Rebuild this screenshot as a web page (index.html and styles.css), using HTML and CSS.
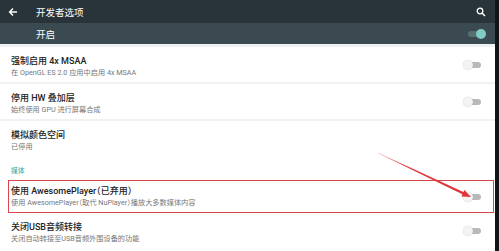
FILE: index.html
```html
<!DOCTYPE html>
<html lang="zh-CN">
<head>
    <meta charset="UTF-8">
    <meta name="viewport" content="width=device-width, initial-scale=1.0">
    <title>开发者选项</title>
    <link rel="stylesheet" href="styles.css">
</head>
<body>
    <div class="screen">
        <div class="settings">
            <div class="toolbar">
                <svg class="back-icon" width="10" height="10" viewBox="0 0 10 10">
                    <path d="M9 5H1.8M5 1.6L1.6 5 5 8.4" stroke="#fff" stroke-width="1.4" fill="none"/>
                </svg>
                <span class="toolbar-title">开发者选项</span>
                <svg class="search-icon" width="10" height="10" viewBox="0 0 10 10">
                    <circle cx="4" cy="4" r="2.8" stroke="#fff" stroke-width="1.3" fill="none"/>
                    <path d="M6 6L9 9" stroke="#fff" stroke-width="1.5"/>
                </svg>
            </div>
            <div class="master-switch">
                <span class="master-label">开启</span>
                <span class="toggle on"><span class="thumb"></span></span>
            </div>
            <div class="spacer"></div>

            <div class="pref divided">
                <div class="pref-text">
                    <div class="pref-title">强制启用 4x MSAA</div>
                    <div class="pref-summary">在 OpenGL ES 2.0 应用中启用 4x MSAA</div>
                </div>
                <span class="toggle"><span class="thumb"></span></span>
            </div>
            <div class="pref divided">
                <div class="pref-text">
                    <div class="pref-title">停用 HW 叠加层</div>
                    <div class="pref-summary">始终使用 GPU 进行屏幕合成</div>
                </div>
                <span class="toggle"><span class="thumb"></span></span>
            </div>
            <div class="pref">
                <div class="pref-text">
                    <div class="pref-title">模拟颜色空间</div>
                    <div class="pref-summary">已停用</div>
                </div>
            </div>

            <div class="category">媒体</div>

            <div class="pref highlighted">
                <div class="pref-text">
                    <div class="pref-title">使用 AwesomePlayer（已弃用）</div>
                    <div class="pref-summary">使用 AwesomePlayer（取代 NuPlayer）播放大多数媒体内容</div>
                </div>
                <span class="toggle"><span class="thumb"></span></span>
            </div>
            <div class="pref">
                <div class="pref-text">
                    <div class="pref-title">关闭USB音频转接</div>
                    <div class="pref-summary">关闭自动转接至USB音频外围设备的功能</div>
                </div>
                <span class="toggle"><span class="thumb"></span></span>
            </div>

            <svg class="pointer-arrow" width="495" height="251" viewBox="0 0 495 251">
                <defs>
                    <linearGradient id="fade" x1="378" y1="153" x2="471" y2="197" gradientUnits="userSpaceOnUse">
                        <stop offset="0" stop-color="#e0353a" stop-opacity="0.35"/>
                        <stop offset="0.35" stop-color="#e0353a"/>
                    </linearGradient>
                </defs>
                <polygon points="377.9,153.2 378.1,152.8 463.4,192.1 464.4,190.0 471,197 461.4,196.4 462.4,194.3" fill="url(#fade)"/>
            </svg>
        </div>
        <div class="edge"></div>
    </div>
</body>
</html>
```

FILE: styles.css
```css
body {
    margin: 0;
    font-family: Roboto, "Noto Sans CJK SC", sans-serif;
    background-color: #111;
}
.screen {
    display: flex;
    width: 499px;
    height: 251px;
    overflow: hidden;
}
.settings {
    position: relative;
    width: 495px;
    background-color: #fff;
}
.edge {
    flex: 1;
    background-color: #121617;
}
.toolbar {
    display: flex;
    align-items: center;
    height: 23px;
    padding: 0 9px 0 8px;
    background-color: #29343a;
    color: #fff;
}
.back-icon {
    margin-right: 18px;
}
.toolbar-title {
    flex: 1;
    font-size: 9.5px;
}
.master-switch {
    display: flex;
    align-items: center;
    height: 21px;
    padding: 0 10px 0 36px;
    background-color: #3a4a50;
    color: #fff;
}
.master-label {
    flex: 1;
    font-size: 9.5px;
}
.spacer {
    height: 3px;
    background-color: #eef0f1;
}
.pref {
    display: flex;
    align-items: center;
    height: 36px;
    padding: 0 14px 0 11px;
    box-sizing: border-box;
}
.pref.divided {
    height: 37px;
    border-bottom: 2px solid #f2f2f2;
}
.pref-text {
    flex: 1;
    padding-top: 3px;
    font-feature-settings: "halt";
}
.pref-title {
    font-size: 9px;
    font-weight: 500;
    line-height: 12px;
    color: #222;
}
.pref-summary {
    font-size: 7.2px;
    line-height: 11px;
    color: #777;
}
.category {
    height: 23px;
    padding: 10px 0 0 11px;
    box-sizing: border-box;
    font-size: 6.8px;
    line-height: 9px;
    color: #2aa198;
}
.pref.highlighted {
    height: 33px;
    margin: 0 1px 0 8px;
    padding: 0 12px 0 2px;
    border: 1px solid #d8474c;
}
.pref.highlighted .pref-text {
    padding-top: 0;
}
.toggle {
    position: relative;
    width: 14px;
    height: 6px;
    border-radius: 3px;
    background-color: #b9b9b9;
}
.toggle .thumb {
    position: absolute;
    top: -2px;
    left: -4px;
    width: 10px;
    height: 10px;
    border-radius: 50%;
    background-color: #f3f3f3;
    box-shadow: 0 0 1px rgba(0, 0, 0, 0.25);
}
.toggle.on {
    width: 17px;
    background-color: #55706f;
}
.toggle.on .thumb {
    left: 8px;
    background-color: #80cbc4;
    box-shadow: none;
}
.pointer-arrow {
    position: absolute;
    top: 0;
    left: 0;
    pointer-events: none;
}
```
